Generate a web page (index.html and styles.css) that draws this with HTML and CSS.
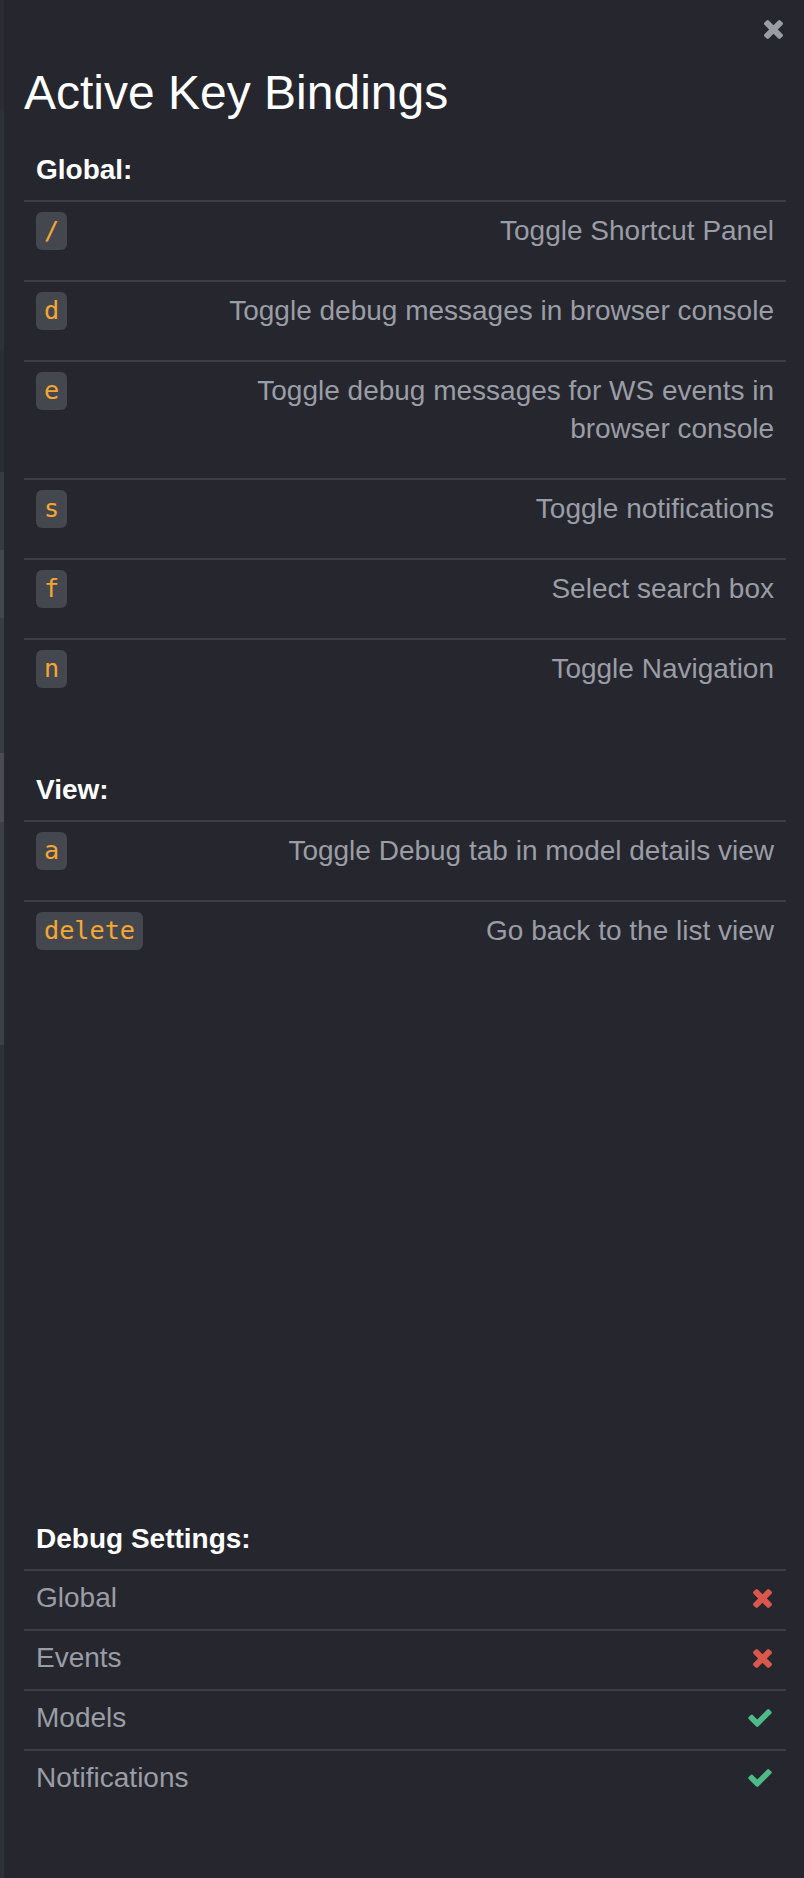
FILE: index.html
```html
<!DOCTYPE html>
<html lang="en">
<head>
<meta charset="utf-8">
<title>Active Key Bindings</title>
<link rel="stylesheet" href="styles.css">
</head>
<body>
<div class="page">
  <div class="backdrop">
    <div class="bd bd1"></div>
    <div class="bd bd2"></div>
    <div class="bd bd3"></div>
    <div class="bd bd4"></div>
    <div class="bd bd5"></div>
    <div class="bd bd6"></div>
    <div class="bd bd7"></div>
    <div class="bd bd8"></div>
    <div class="bd bd9"></div>
  </div>
  <div class="panel">
    <button class="close" aria-label="Close">
      <svg viewBox="302 366 1188 1188" width="19" height="19"><path fill="currentColor" d="M1490 1322q0 40-28 68l-136 136q-28 28-68 28t-68-28l-294-294-294 294q-28 28-68 28t-68-28l-136-136q-28-28-28-68t28-68l294-294-294-294q-28-28-28-68t28-68l136-136q28-28 68-28t68 28l294 294 294-294q28-28 68-28t68 28l136 136q28 28 28 68t-28 68l-294 294 294 294q28 28 28 68z"/></svg>
    </button>
    <h1 class="title">Active Key Bindings</h1>

    <section class="section">
      <h2 class="section-title">Global:</h2>
      <div class="binding"><code class="key">/</code><span class="desc">Toggle Shortcut Panel</span></div>
      <div class="binding"><code class="key">d</code><span class="desc">Toggle debug messages in browser console</span></div>
      <div class="binding"><code class="key">e</code><span class="desc">Toggle debug messages for WS events in browser console</span></div>
      <div class="binding"><code class="key">s</code><span class="desc">Toggle notifications</span></div>
      <div class="binding"><code class="key">f</code><span class="desc">Select search box</span></div>
      <div class="binding"><code class="key">n</code><span class="desc">Toggle Navigation</span></div>
    </section>

    <section class="section">
      <h2 class="section-title">View:</h2>
      <div class="binding"><code class="key">a</code><span class="desc">Toggle Debug tab in model details view</span></div>
      <div class="binding"><code class="key">delete</code><span class="desc">Go back to the list view</span></div>
    </section>

    <section class="section debug">
      <h2 class="section-title">Debug Settings:</h2>
      <div class="setting"><span>Global</span>
        <svg class="icon off" viewBox="302 366 1188 1188" width="19" height="19"><path fill="currentColor" d="M1490 1322q0 40-28 68l-136 136q-28 28-68 28t-68-28l-294-294-294 294q-28 28-68 28t-68-28l-136-136q-28-28-28-68t28-68l294-294-294-294q-28-28-28-68t28-68l136-136q28-28 68-28t68 28l294 294 294-294q28-28 68-28t68 28l136 136q28 28 28 68t-28 68l-294 294 294 294q28 28 28 68z"/></svg>
      </div>
      <div class="setting"><span>Events</span>
        <svg class="icon off" viewBox="302 366 1188 1188" width="19" height="19"><path fill="currentColor" d="M1490 1322q0 40-28 68l-136 136q-28 28-68 28t-68-28l-294-294-294 294q-28 28-68 28t-68-28l-136-136q-28-28-28-68t28-68l294-294-294-294q-28-28-28-68t28-68l136-136q28-28 68-28t68 28l294 294 294-294q28-28 68-28t68 28l136 136q28 28 28 68t-28 68l-294 294 294 294q28 28 28 68z"/></svg>
      </div>
      <div class="setting"><span>Models</span>
        <svg class="icon on" viewBox="121 334 1550 1188" width="24" height="18"><path fill="currentColor" d="M1671 566q0 40-28 68l-724 724-136 136q-28 28-68 28t-68-28l-136-136-362-362q-28-28-28-68t28-68l136-136q28-28 68-28t68 28l294 295 656-657q28-28 68-28t68 28l136 136q28 28 28 68z"/></svg>
      </div>
      <div class="setting"><span>Notifications</span>
        <svg class="icon on" viewBox="121 334 1550 1188" width="24" height="18"><path fill="currentColor" d="M1671 566q0 40-28 68l-724 724-136 136q-28 28-68 28t-68-28l-136-136-362-362q-28-28-28-68t28-68l136-136q28-28 68-28t68 28l294 295 656-657q28-28 68-28t68 28l136 136q28 28 28 68z"/></svg>
      </div>
    </section>
  </div>
</div>
</body>
</html>
```

FILE: styles.css
```css
html, body {
  margin: 0;
  padding: 0;
  background: #25262e;
}

.page {
  display: flex;
  min-height: 100vh;
}

.backdrop {
  flex: none;
  width: 4px;
  display: flex;
  flex-direction: column;
}

.bd1 { height: 110px; background: #2b2c34; }
.bd2 { height: 240px; background: #2f3139; }
.bd3 { height: 122px; background: #2b2d35; }
.bd4 { height: 78px;  background: #383a43; }
.bd5 { height: 68px;  background: #454750; }
.bd6 { height: 135px; background: #3a3c45; }
.bd7 { height: 69px;  background: #4a4b54; }
.bd8 { height: 223px; background: #3d3f48; }
.bd9 { flex: 1;       background: #2f3139; }

.panel {
  flex: 1;
  position: relative;
  display: flex;
  flex-direction: column;
  box-sizing: border-box;
  min-height: 100vh;
  padding: 67px 18px 69px 20px;
  background: #25262e;
  font-family: "Liberation Sans", Arial, Helvetica, sans-serif;
}

.close {
  position: absolute;
  top: 20px;
  right: 21px;
  width: 19px;
  height: 19px;
  padding: 0;
  border: 0;
  background: none;
  color: #9a9da5;
  display: flex;
}

.title {
  margin: 0;
  font-size: 48px;
  line-height: 52px;
  font-weight: 400;
  color: #ffffff;
}

.section {
  display: flex;
  flex-direction: column;
}

.section + .section {
  margin-top: 21px;
}

.section.debug {
  margin-top: auto;
}

.section-title {
  margin: 32px 0 0;
  padding: 0 12px 11px;
  font-size: 28px;
  line-height: 38px;
  font-weight: 700;
  color: #ffffff;
}

.binding {
  display: flex;
  justify-content: space-between;
  align-items: flex-start;
  gap: 24px;
  border-top: 2px solid #3c3e47;
  padding: 10px 12px 30px;
}

.key {
  flex: none;
  display: inline-block;
  height: 38px;
  line-height: 38px;
  padding: 0 8px;
  border-radius: 6px;
  background: #45474f;
  color: #f5a733;
  font-family: "DejaVu Sans Mono", "Liberation Mono", monospace;
  font-size: 25.2px;
}

.desc {
  flex: 0 1 auto;
  max-width: 580px;
  text-align: right;
  color: #9a9da5;
  font-size: 28px;
  line-height: 38px;
}

.setting {
  display: flex;
  justify-content: space-between;
  align-items: center;
  border-top: 2px solid #3c3e47;
  padding: 8px 14px 12px 12px;
  color: #9a9da5;
  font-size: 28px;
  line-height: 38px;
}

.icon {
  display: block;
  flex: none;
}

.icon.off {
  color: #d9574c;
}

.icon.on {
  color: #4cbb88;
}
```
